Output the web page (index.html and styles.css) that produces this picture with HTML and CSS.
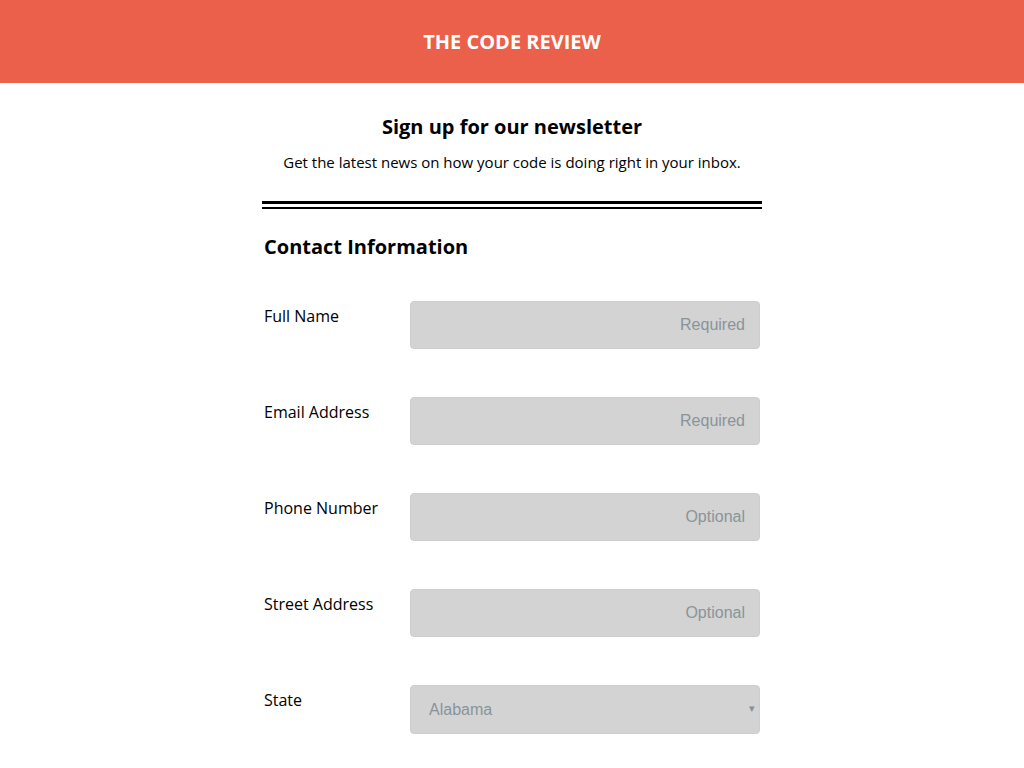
FILE: index.html
```html
<!DOCTYPE html>
<html lang="en">
<head>
<meta charset="utf-8">
<title>The Code Review</title>
<link rel="stylesheet" href="styles.css">
</head>
<body>
<header class="site-header">
  <h1 class="brand">THE CODE REVIEW</h1>
</header>
<main class="content">
  <section class="intro">
    <h2 class="intro-title">Sign up for our newsletter</h2>
    <p class="intro-text">Get the latest news on how your code is doing right in your inbox.</p>
  </section>
  <div class="divider"></div>
  <form class="form">
    <h3 class="form-title">Contact Information</h3>
    <div class="row">
      <label class="label" for="name">Full Name</label>
      <input class="field" id="name" type="text" placeholder="Required">
    </div>
    <div class="row">
      <label class="label" for="email">Email Address</label>
      <input class="field" id="email" type="email" placeholder="Required">
    </div>
    <div class="row">
      <label class="label" for="phone">Phone Number</label>
      <input class="field" id="phone" type="tel" placeholder="Optional">
    </div>
    <div class="row">
      <label class="label" for="street">Street Address</label>
      <input class="field" id="street" type="text" placeholder="Optional">
    </div>
    <div class="row">
      <label class="label" for="state">State</label>
      <div class="select-wrap">
        <select class="select" id="state">
          <option>Alabama</option>
          <option>Alaska</option>
          <option>Arizona</option>
        </select>
        <span class="caret">▾</span>
      </div>
    </div>
  </form>
</main>
</body>
</html>
```

FILE: styles.css
```css
* { box-sizing: border-box; }
body {
  margin: 0;
  font-family: "Open Sans", "Liberation Sans", sans-serif;
  color: #000;
  background: #fff;
}
.site-header {
  height: 83px;
  background: #eb604a;
  display: flex;
  align-items: center;
  justify-content: center;
}
.brand {
  margin: 0;
  color: #fff;
  font-size: 20px;
  font-weight: 700;
  letter-spacing: 0;
}
.content {
  width: 500px;
  margin: 0 auto;
}
.intro {
  text-align: center;
  padding-top: 30px;
}
.intro-title {
  margin: 0;
  font-size: 20px;
  line-height: 28px;
  font-weight: 700;
}
.intro-text {
  margin: 11px 0 0;
  font-size: 15px;
  line-height: 20px;
}
.divider {
  margin-top: 29px;
  height: 8px;
  border-top: 3px solid #000;
  border-bottom: 2px solid #000;
}
.form {
  padding: 0 2px;
}
.form-title {
  margin: 24px 0 0;
  font-size: 20px;
  line-height: 28px;
  font-weight: 700;
}
.row {
  display: flex;
  align-items: flex-start;
  margin-top: 40px;
}
.row + .row { margin-top: 48px; }
.label {
  width: 146px;
  flex: none;
  font-size: 16px;
  line-height: 22px;
  padding-top: 4px;
}
.field {
  width: 350px;
  height: 48px;
  border: 1px solid #cdcdcd;
  border-radius: 4px;
  background: #d3d3d3;
  padding: 0 14px;
  text-align: right;
  font-family: "Liberation Sans", Arial, sans-serif;
  font-size: 16px;
  color: #333;
  outline: none;
}
.field::placeholder { color: #89939a; }
.select-wrap {
  position: relative;
  width: 350px;
}
.select {
  width: 350px;
  height: 49px;
  border: 1px solid #cdcdcd;
  border-radius: 4px;
  background: #d3d3d3;
  padding: 0 18px;
  font-family: "Liberation Sans", Arial, sans-serif;
  font-size: 16px;
  color: #89939a;
  appearance: none;
  -webkit-appearance: none;
  outline: none;
}
.caret {
  position: absolute;
  right: 5px;
  top: 15px;
  font-size: 11px;
  color: #8a8f94;
  pointer-events: none;
}
```
